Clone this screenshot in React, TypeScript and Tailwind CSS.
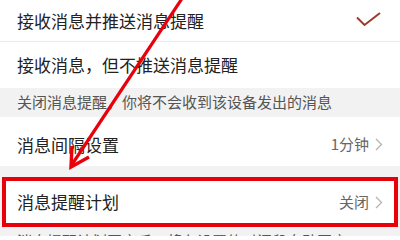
const Chevron = () => (
  <svg width="8" height="13" viewBox="0 0 8 13" className="ml-[6px]">
    <path d="M1 1 L6.5 6.5 L1 12" fill="none" stroke="#b3b3b3" strokeWidth="1.3" />
  </svg>
);

export default function App() {
  return (
    <div
      className="relative w-[400px] h-[236px] overflow-hidden bg-[#f2f2f2] text-[#222]"
      style={{ fontFamily: '"Noto Sans CJK SC", "Noto Sans", sans-serif' }}
    >
      <div className="bg-white">
        <div className="h-[42px] flex items-center justify-between pl-[17px] pr-[18px] border-b border-[#ececec]">
          <span className="text-[17px]">接收消息并推送消息提醒</span>
          <svg width="26" height="18" viewBox="0 0 26 18">
            <path d="M1 5.5 L8.5 13 L24 1" fill="none" stroke="#9b3a26" strokeWidth="2" />
          </svg>
        </div>
        <div className="h-[46px] flex items-center pl-[17px]">
          <span className="text-[17px]">接收消息，但不推送消息提醒</span>
        </div>
      </div>
      <div className="h-[29px] flex items-center pl-[17px] text-[15px] text-[#555]">
        关闭消息提醒，你将不会收到该设备发出的消息
      </div>
      <div className="h-[49px] bg-white flex items-center justify-between pl-[17px] pr-[17px] pt-[6px]">
        <span className="text-[17px]">消息间隔设置</span>
        <div className="flex items-center text-[15px] text-[#666]">
          1分钟
          <Chevron />
        </div>
      </div>
      <div className="h-[11px]" />
      <div className="h-[50px] mx-[2px] bg-white border-4 border-[#e8000b] flex items-center justify-between pl-[11px] pr-[11px]">
        <span className="text-[17px]">消息提醒计划</span>
        <div className="flex items-center text-[15px] text-[#666]">
          关闭
          <Chevron />
        </div>
      </div>
      <div className="pl-[17px] pt-[3px] text-[15px] text-[#555] whitespace-nowrap">
        消息提醒计划开启后，将在设置的时间段自动开启
      </div>
      <svg className="absolute left-0 top-0 pointer-events-none" width="400" height="236" viewBox="0 0 400 236">
        <line x1="183" y1="-3" x2="71" y2="166" stroke="#e8000b" strokeWidth="3.2" />
        <polyline points="72,146 71,167 89,157" fill="none" stroke="#e8000b" strokeWidth="3.4" />
      </svg>
    </div>
  );
}
